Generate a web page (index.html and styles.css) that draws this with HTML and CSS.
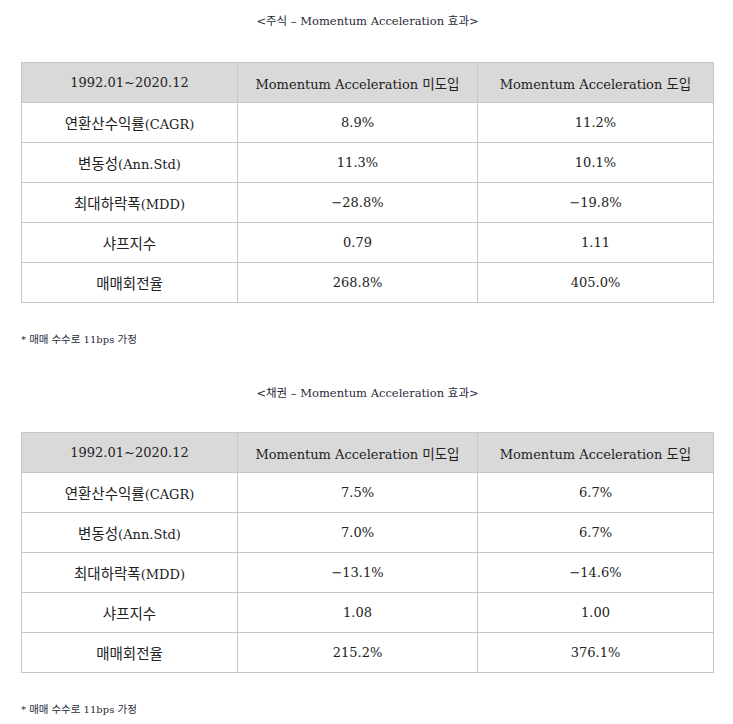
FILE: index.html
```html
<!DOCTYPE html>
<html lang="ko">
<head>
<meta charset="utf-8">
<link rel="stylesheet" href="styles.css">
</head>
<body>
<div class="page">
  <section class="block">
    <p class="caption">&lt;<span class="ko">주식</span> – Momentum Acceleration <span class="ko">효과</span>&gt;</p>
    <table class="tbl">
      <thead>
        <tr><th class="c1">1992.01~2020.12</th><th class="c2">Momentum Acceleration <span class="ko">미도입</span></th><th class="c3">Momentum Acceleration <span class="ko">도입</span></th></tr>
      </thead>
      <tbody>
        <tr><td><span class="ko">연환산수익률</span>(CAGR)</td><td>8.9%</td><td>11.2%</td></tr>
        <tr><td><span class="ko">변동성</span>(Ann.Std)</td><td>11.3%</td><td>10.1%</td></tr>
        <tr><td><span class="ko">최대하락폭</span>(MDD)</td><td>−28.8%</td><td>−19.8%</td></tr>
        <tr><td><span class="ko">샤프지수</span></td><td>0.79</td><td>1.11</td></tr>
        <tr><td><span class="ko">매매회전율</span></td><td>268.8%</td><td>405.0%</td></tr>
      </tbody>
    </table>
    <p class="note">* <span class="ko">매매 수수로</span> 11bps <span class="ko">가정</span></p>
  </section>
  <section class="block second">
    <p class="caption">&lt;<span class="ko">채권</span> – Momentum Acceleration <span class="ko">효과</span>&gt;</p>
    <table class="tbl">
      <thead>
        <tr><th class="c1">1992.01~2020.12</th><th class="c2">Momentum Acceleration <span class="ko">미도입</span></th><th class="c3">Momentum Acceleration <span class="ko">도입</span></th></tr>
      </thead>
      <tbody>
        <tr><td><span class="ko">연환산수익률</span>(CAGR)</td><td>7.5%</td><td>6.7%</td></tr>
        <tr><td><span class="ko">변동성</span>(Ann.Std)</td><td>7.0%</td><td>6.7%</td></tr>
        <tr><td><span class="ko">최대하락폭</span>(MDD)</td><td>−13.1%</td><td>−14.6%</td></tr>
        <tr><td><span class="ko">샤프지수</span></td><td>1.08</td><td>1.00</td></tr>
        <tr><td><span class="ko">매매회전율</span></td><td>215.2%</td><td>376.1%</td></tr>
      </tbody>
    </table>
    <p class="note">* <span class="ko">매매 수수로</span> 11bps <span class="ko">가정</span></p>
  </section>
</div>
</body>
</html>
```

FILE: styles.css
```css
html, body {
  margin: 0;
  padding: 0;
  background: #ffffff;
}
body {
  font-family: "DejaVu Serif", "Noto Sans CJK KR", serif;
  color: #222222;
}
.ko {
  font-family: "Noto Sans CJK KR", sans-serif;
}
.page {
  width: 693px;
  margin-left: 21px;
  padding-top: 10px;
}
.caption {
  margin: 0;
  height: 20px;
  line-height: 20px;
  text-align: center;
  font-size: 11.5px;
  color: #1f2a3a;
}
.tbl {
  margin-top: 32px;
  width: 693px;
  border-collapse: collapse;
  table-layout: fixed;
}
.tbl th, .tbl td {
  border: 1px solid #c6c6c6;
  height: 39px;
  padding: 0;
  text-align: center;
  font-size: 13px;
  font-weight: normal;
  color: #222222;
}
.tbl td .ko {
  font-size: 14.5px;
}
.tbl th .ko {
  font-size: 13.5px;
}
.tbl th {
  background: #d9d9d9;
}
.c1 { width: 215px; }
.c2 { width: 239px; }
.note {
  margin: 26px 0 0 0;
  height: 20px;
  line-height: 20px;
  font-size: 10px;
  color: #1f2a3a;
}
.note .ko {
  font-size: 10.5px;
}
.second {
  margin-top: 33px;
}
.second .tbl {
  margin-top: 30px;
}
```
